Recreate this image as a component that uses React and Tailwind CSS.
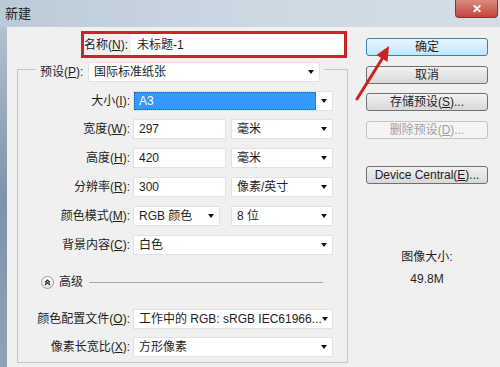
import React from "react";

const font = "font-['Liberation_Sans','Noto_Sans_CJK_SC',sans-serif]";

function Arrow() {
  return (
    <span className="ml-auto w-0 h-0 border-l-[3.5px] border-r-[3.5px] border-t-[4px] border-l-transparent border-r-transparent border-t-[#111]" />
  );
}

function Select({ w, children, selected }) {
  return (
    <div className={`${w} h-[20px] bg-white border border-[#e2e2e2] flex items-center pr-[5px]`}>
      {selected ? (
        <div className="h-[18px] w-[182px] bg-[#3399ff] border border-dotted border-[#1c5fa8] text-white flex items-center pl-[4px]">
          {children}
        </div>
      ) : (
        <span className="pl-[5px] whitespace-nowrap">{children}</span>
      )}
      <Arrow />
    </div>
  );
}

function Input({ w, children }) {
  return (
    <div className={`${w} h-[20px] bg-white border border-[#e2e2e2] flex items-center pl-[5px]`}>
      {children}
    </div>
  );
}

function Label({ text, k }) {
  return (
    <div className="w-[115px] text-right pr-[3px] whitespace-nowrap">
      {text}(<u>{k}</u>):
    </div>
  );
}

function Btn({ children, primary, disabled, mt }) {
  return (
    <div
      className={`${mt} w-[122px] h-[18px] rounded-[3px] border flex items-center justify-center ${
        primary
          ? "border-[#3c7fb1] bg-gradient-to-b from-[#eaf6fd] to-[#bee6fd]"
          : disabled
          ? "border-[#c4c4c4] bg-[#f4f4f4] text-[#a0a0a0]"
          : "border-[#707070] bg-gradient-to-b from-[#f2f2f2] to-[#d8d8d8]"
      }`}
    >
      {children}
    </div>
  );
}

export default function App() {
  return (
    <div className={`${font} relative w-[500px] h-[367px] overflow-hidden flex flex-col text-[12px] text-[#1e1e1e] leading-none`}>
      {/* title bar */}
      <div className="h-[27px] flex items-start bg-gradient-to-r from-[#bccad8] via-[#cdd8e3] to-[#d5dee7]">
        <div className="pl-[5px] pt-[7px] text-[13px]">新建</div>
        <div className="ml-auto mr-[2px] w-[43px] h-[18px] rounded-b-[4px] border border-t-0 border-[#7a3a3a] bg-gradient-to-b from-[#d88b80] to-[#c4433b] flex items-center justify-center text-white font-bold text-[12px]">
          ✕
        </div>
      </div>

      <div className="flex-1 flex">
        <div className="w-[7px] bg-gradient-to-b from-[#b3c1cf] via-[#7d93aa] to-[#8fa3b7]" />
        <div className="flex-1 bg-[#f0f0f0] flex">
          {/* left column */}
          <div className="w-[340px] pt-[4px]">
            <div className="ml-[74px] w-[266px] h-[27px] border-[3px] border-[#c8262d] flex items-center">
              <div className="w-[47px] whitespace-nowrap">
                名称(<u>N</u>):
              </div>
              <div className="flex-1 h-full bg-white flex items-center pl-[6px]">未标题-1</div>
            </div>

            <div className="mt-[11px] ml-[10px] w-[331px] h-[294px] border border-[#c6c6c6]">
              <div className="-mt-[8px] ml-[18px] w-[288px] px-[4px] bg-[#f0f0f0] flex items-center">
                <div className="w-[48px] whitespace-nowrap">
                  预设(<u>P</u>):
                </div>
                <Select w="w-[232px]">国际标准纸张</Select>
              </div>

              <div className="mt-[9px] flex items-center">
                <Label text="大小" k="I" />
                <Select w="w-[200px]" selected>
                  A3
                </Select>
              </div>
              <div className="mt-[8px] flex items-center">
                <Label text="宽度" k="W" />
                <Input w="w-[93px]">297</Input>
                <div className="ml-[5px]">
                  <Select w="w-[102px]">毫米</Select>
                </div>
              </div>
              <div className="mt-[9px] flex items-center">
                <Label text="高度" k="H" />
                <Input w="w-[93px]">420</Input>
                <div className="ml-[5px]">
                  <Select w="w-[102px]">毫米</Select>
                </div>
              </div>
              <div className="mt-[9px] flex items-center">
                <Label text="分辨率" k="R" />
                <Input w="w-[93px]">300</Input>
                <div className="ml-[5px]">
                  <Select w="w-[102px]">像素/英寸</Select>
                </div>
              </div>
              <div className="mt-[9px] flex items-center">
                <Label text="颜色模式" k="M" />
                <Select w="w-[87px]">RGB 颜色</Select>
                <div className="ml-[11px]">
                  <Select w="w-[102px]">8 位</Select>
                </div>
              </div>
              <div className="mt-[9px] flex items-center">
                <Label text="背景内容" k="C" />
                <Select w="w-[200px]">白色</Select>
              </div>

              <div className="mt-[17px] h-[20px] flex items-center">
                <div className="ml-[23px] w-[13px] h-[13px] rounded-full border border-[#9a9a9a] bg-gradient-to-b from-white to-[#e4e4e4] flex items-center justify-center">
                  <svg width="7" height="7" viewBox="0 0 7 7">
                    <path d="M1 3.5 L3.5 1 L6 3.5 M1 6 L3.5 3.5 L6 6" fill="none" stroke="#222" strokeWidth="1.2" />
                  </svg>
                </div>
                <div className="ml-[5px]">高级</div>
                <div className="flex-1 ml-[6px] mr-[24px] h-px bg-[#a8a8a8]" />
              </div>

              <div className="mt-[17px] flex items-center">
                <Label text="颜色配置文件" k="O" />
                <Select w="w-[200px]">工作中的 RGB: sRGB IEC61966...</Select>
              </div>
              <div className="mt-[8px] flex items-center">
                <Label text="像素长宽比" k="X" />
                <Select w="w-[200px]">方形像素</Select>
              </div>
            </div>
          </div>

          {/* right column */}
          <div className="flex-1 pl-[19px] pt-[11px]">
            <Btn primary>确定</Btn>
            <Btn mt="mt-[10px]">取消</Btn>
            <Btn mt="mt-[9px]">
              存储预设(<u>S</u>)...
            </Btn>
            <Btn mt="mt-[10px]" disabled>
              删除预设(<u>D</u>)...
            </Btn>
            <Btn mt="mt-[27px]">
              Device Central(<u>E</u>)...
            </Btn>
            <div className="mt-[67px] w-[122px] text-center">图像大小:</div>
            <div className="mt-[10px] w-[122px] text-center">49.8M</div>
          </div>
        </div>
      </div>

      {/* red annotation arrow */}
      <svg className="absolute left-0 top-0 pointer-events-none" width="500" height="367">
        <line x1="357" y1="99" x2="382" y2="59" stroke="#cc2222" strokeWidth="3" strokeLinecap="round" />
        <polygon points="389,46 387.5,62 376.5,55" fill="#cc2222" />
      </svg>
    </div>
  );
}
